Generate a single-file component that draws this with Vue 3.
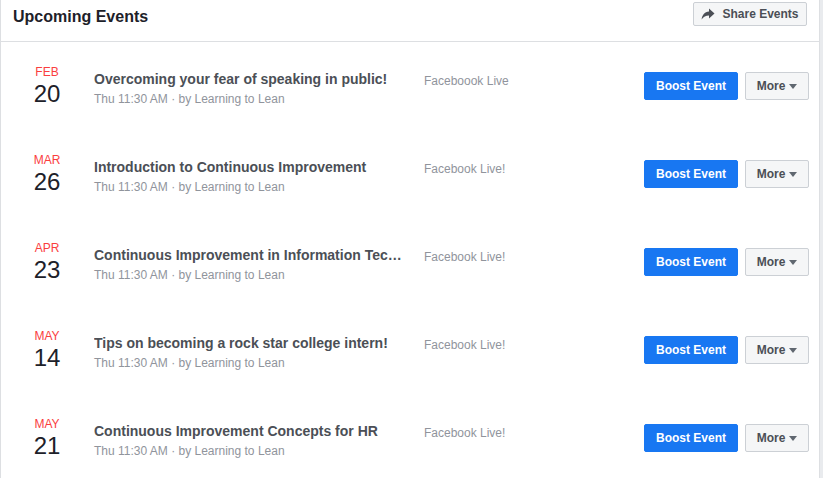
<template>
  <div class="page">
    <div class="panel">
      <div class="panel-header">
        <h2 class="panel-title">Upcoming Events</h2>
        <button class="btn share-btn">
          <svg class="share-icon" viewBox="0 0 14 12">
            <path d="M8 0.5 13.5 5.5 8 10.5V7.4C4.8 7.4 2.4 8.6 0.6 11.4 1 7 3.6 3.8 8 3.4Z" />
          </svg>
          Share Events
        </button>
      </div>
      <div v-for="event in events" :key="event.title" class="event-row">
        <div class="event-date">
          <div class="event-month">{{ event.month }}</div>
          <div class="event-day">{{ event.day }}</div>
        </div>
        <div class="event-info">
          <div class="event-title">{{ event.title }}</div>
          <div class="event-meta">Thu 11:30 AM · by Learning to Lean</div>
        </div>
        <div class="event-place">{{ event.place }}</div>
        <div class="event-actions">
          <button class="btn boost-btn">Boost Event</button>
          <button class="btn more-btn">More<span class="caret"></span></button>
        </div>
      </div>
    </div>
  </div>
</template>

<script setup>
const events = [
  { month: 'FEB', day: '20', title: 'Overcoming your fear of speaking in public!', place: 'Faceboook Live' },
  { month: 'MAR', day: '26', title: 'Introduction to Continuous Improvement', place: 'Facebook Live!' },
  { month: 'APR', day: '23', title: 'Continuous Improvement in Information Technology', place: 'Facebook Live!' },
  { month: 'MAY', day: '14', title: 'Tips on becoming a rock star college intern!', place: 'Facebook Live!' },
  { month: 'MAY', day: '21', title: 'Continuous Improvement Concepts for HR', place: 'Facebook Live!' }
]
</script>

<style>
html,
body {
  margin: 0;
  overflow: hidden;
}
</style>

<style scoped>
.page {
  width: 823px;
  height: 478px;
  background: #e9ebee;
  font-family: "Liberation Sans", Arial, sans-serif;
  overflow: hidden;
}

.panel {
  width: 818px;
  height: 478px;
  background: #fff;
  border-left: 1px solid #dddfe2;
  border-right: 1px solid #dddfe2;
}

.panel-header {
  height: 41px;
  border-bottom: 1px solid #dddfe2;
  display: flex;
  justify-content: space-between;
  padding: 0 12px;
}

.panel-title {
  margin: 7px 0 0;
  font-size: 16px;
  line-height: 20px;
  font-weight: bold;
  color: #1d2129;
}

.btn {
  font-family: inherit;
  font-size: 12px;
  font-weight: bold;
  box-sizing: border-box;
  border-radius: 2px;
  cursor: pointer;
  white-space: nowrap;
}

.share-btn {
  margin-top: 2px;
  width: 114px;
  height: 24px;
  padding: 0;
  display: flex;
  align-items: center;
  justify-content: center;
  gap: 7px;
  background: #f5f6f7;
  border: 1px solid #ccd0d5;
  color: #4b4f56;
}

.share-icon {
  width: 14px;
  height: 12px;
  fill: #4b4f56;
}

.event-row {
  height: 88px;
  display: flex;
  align-items: center;
}

.event-date {
  width: 93px;
  flex-shrink: 0;
  text-align: center;
  padding-right: 1px;
  box-sizing: border-box;
  margin-top: 1px;
}

.event-month {
  font-size: 12px;
  line-height: 14px;
  margin-bottom: 1px;
  color: #fa3e3e;
}

.event-day {
  font-size: 24px;
  line-height: 28px;
  color: #1d2129;
}

.event-info {
  width: 308px;
  flex-shrink: 0;
  margin-top: 5px;
}

.event-title {
  font-size: 14px;
  line-height: 18px;
  font-weight: bold;
  color: #4b4f56;
  white-space: nowrap;
  overflow: hidden;
  text-overflow: ellipsis;
}

.event-meta {
  margin-top: 3px;
  font-size: 12px;
  line-height: 16px;
  color: #90949c;
}

.event-place {
  width: 220px;
  flex-shrink: 0;
  margin-left: 22px;
  margin-top: -10px;
  font-size: 12px;
  line-height: 16px;
  color: #90949c;
}

.event-actions {
  display: flex;
  gap: 7px;
}

.boost-btn {
  width: 94px;
  height: 28px;
  padding: 0;
  background: #1877f2;
  border: 1px solid #1877f2;
  color: #fff;
}

.more-btn {
  width: 64px;
  height: 28px;
  padding: 0;
  display: flex;
  align-items: center;
  justify-content: center;
  gap: 4px;
  background: #f5f6f7;
  border: 1px solid #ccd0d5;
  color: #4b4f56;
}

.caret {
  width: 0;
  height: 0;
  border-left: 4.5px solid transparent;
  border-right: 4.5px solid transparent;
  border-top: 5px solid #606770;
}
</style>
